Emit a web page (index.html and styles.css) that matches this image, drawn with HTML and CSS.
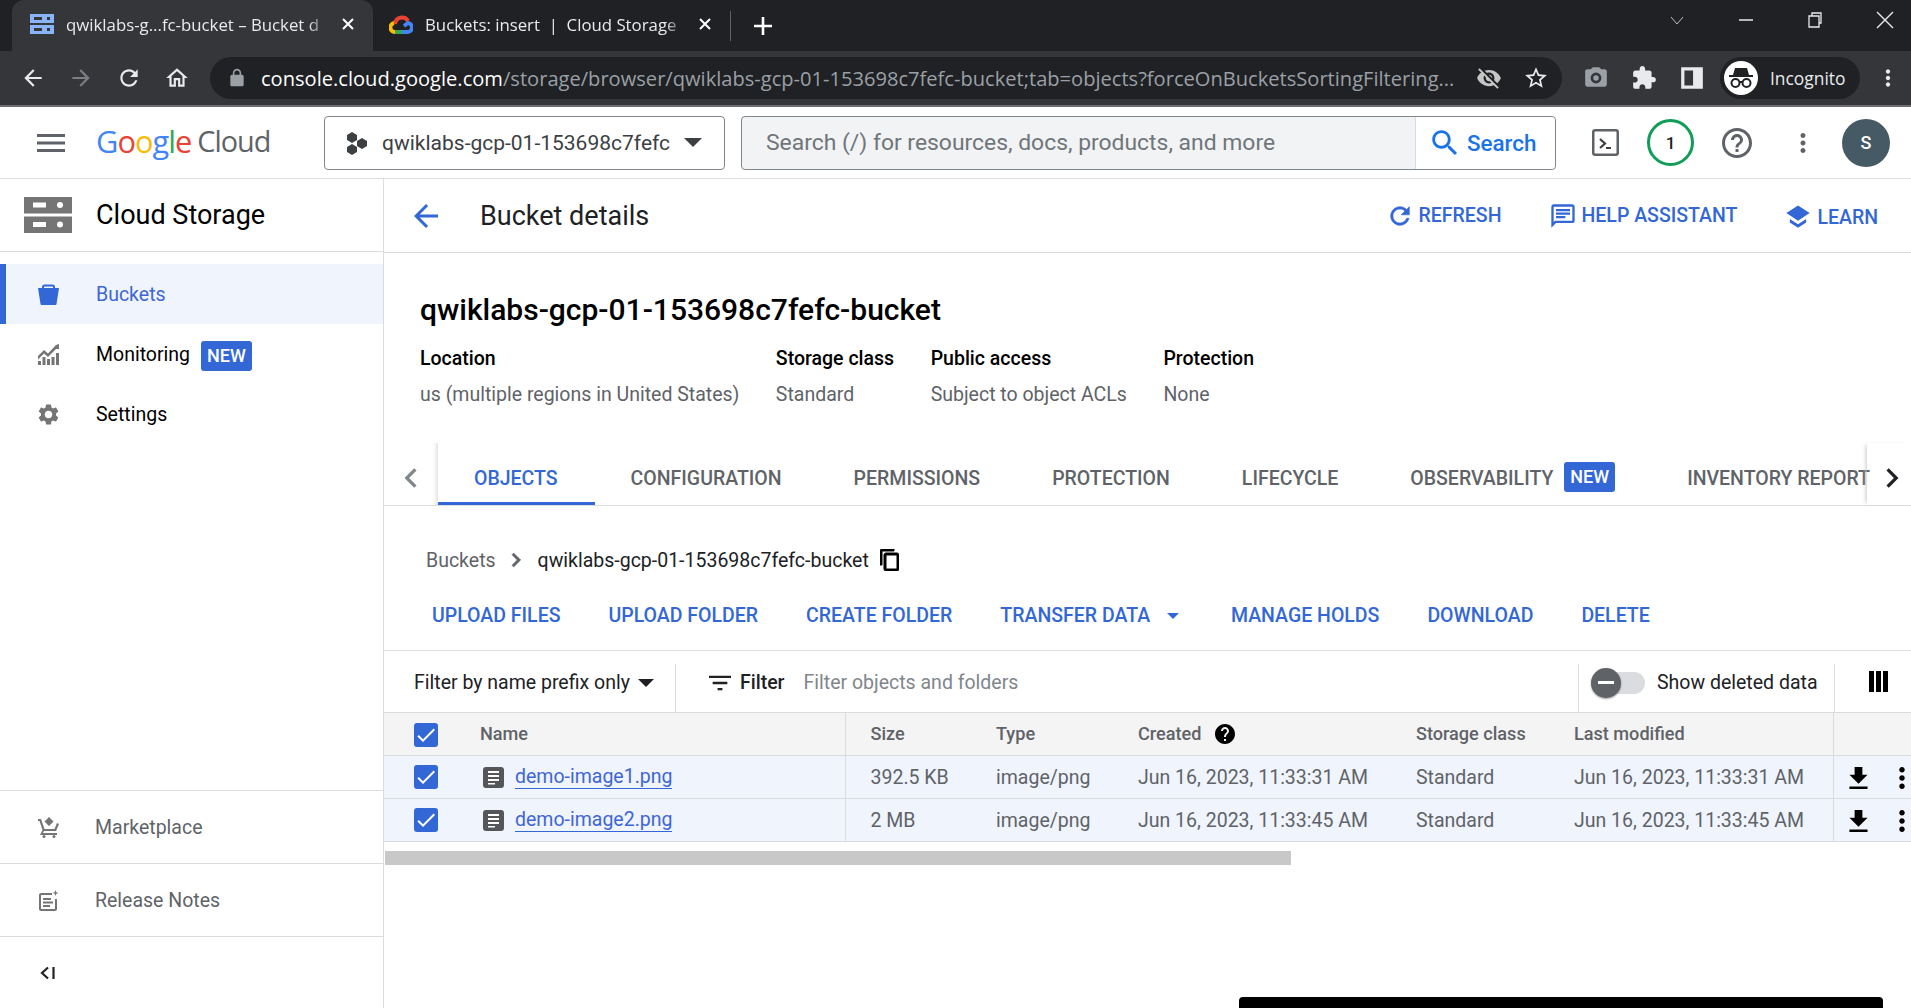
FILE: index.html
```html
<!DOCTYPE html>
<html lang="en">
<head>
    <meta charset="UTF-8">
    <title>Bucket details - Cloud Storage</title>
    <link rel="stylesheet" href="styles.css">
</head>
<body>
    <!-- browser chrome -->
    <div class="tabstrip">
        <div class="tab active">
            <svg class="favicon" viewBox="0 0 24 20"><path fill="#8ab4f8" d="M0 0h24v9H0zM0 11h24v9H0z"/><path fill="#35363a" d="M4 3h8v3H4zM4 14h8v3H4zM17 3h3v3h-3zM17 14h3v3h-3z"/></svg>
            <span class="tab-title">qwiklabs-g...fc-bucket – Bucket d</span>
            <svg class="tab-close" viewBox="0 0 14 14"><path stroke="#fff" stroke-width="2" d="M2 2l10 10M12 2L2 12"/></svg>
        </div>
        <div class="tab second">
            <svg class="favicon" viewBox="0 0 24 24"><path fill="none" stroke="#ea4335" stroke-width="4" d="M6 12a7 7 0 0 1 13-3"/><path fill="none" stroke="#fbbc04" stroke-width="4" d="M7 20a4.5 4.5 0 0 1-2-9"/><path fill="none" stroke="#34a853" stroke-width="4" d="M6 20h8"/><path fill="none" stroke="#4285f4" stroke-width="4" d="M13 20h5a4.5 4.5 0 0 0 1-9l-4 3"/></svg>
            <span class="tab-title">Buckets: insert &nbsp;|&nbsp; Cloud Storage &nbsp;|</span>
            <svg class="tab-close" viewBox="0 0 14 14"><path stroke="#fff" stroke-width="2" d="M2 2l10 10M12 2L2 12"/></svg>
        </div>
        <span class="tab-sep"></span>
        <svg class="new-tab" viewBox="0 0 20 20"><path stroke="#fff" stroke-width="2.6" d="M10 1v18M1 10h18"/></svg>
        <div class="window-controls">
            <svg width="16" height="16" viewBox="0 0 16 16"><path fill="none" stroke="#bdc1c6" d="M2 5l6 7 6-7"/></svg>
            <svg width="16" height="16" viewBox="0 0 16 16"><path stroke="#e8eaed" stroke-width="1.5" d="M1 8h14"/></svg>
            <svg width="16" height="16" viewBox="0 0 16 16"><path fill="none" stroke="#e8eaed" stroke-width="1.3" d="M2 4h10v11H2zM5 4V1h9v10h-2"/></svg>
            <svg width="18" height="18" viewBox="0 0 18 18"><path stroke="#e8eaed" stroke-width="1.4" d="M1 1l16 16M17 1L1 17"/></svg>
        </div>
    </div>
    <div class="toolbar">
        <div class="nav-btns">
            <svg class="tb-icon" viewBox="0 0 24 24"><path fill="#e8eaed" d="M20 11H7.83l5.59-5.59L12 4l-8 8 8 8 1.41-1.41L7.83 13H20v-2z"/></svg>
            <svg class="tb-icon" viewBox="0 0 24 24"><path fill="#7b7e83" d="M4 11h12.17l-5.59-5.59L12 4l8 8-8 8-1.41-1.41L16.17 13H4v-2z"/></svg>
            <svg class="tb-icon" viewBox="0 0 24 24"><path fill="#e8eaed" d="M17.65 6.35C16.2 4.9 14.21 4 12 4c-4.42 0-7.99 3.58-7.99 8s3.57 8 7.99 8c3.73 0 6.84-2.55 7.73-6h-2.08c-.82 2.33-3.04 4-5.65 4-3.31 0-6-2.69-6-6s2.69-6 6-6c1.66 0 3.14.69 4.22 1.78L13 11h7V4l-2.35 2.35z"/></svg>
            <svg class="tb-icon" viewBox="0 0 24 24"><path fill="#e8eaed" d="M12 5.69l5 4.5V18h-2v-6H9v6H7v-7.81l5-4.5M12 3L2 12h3v8h6v-6h2v6h6v-8h3L12 3z"/></svg>
        </div>
        <div class="omnibox">
            <svg class="lock" viewBox="0 0 24 24"><path fill="#9aa0a6" d="M18 8h-1V6c0-2.76-2.24-5-5-5S7 3.24 7 6v2H6c-1.1 0-2 .9-2 2v10c0 1.1.9 2 2 2h12c1.1 0 2-.9 2-2V10c0-1.1-.9-2-2-2zm-2.900 0H8.900V6c0-1.71 1.39-3.1 3.1-3.1 1.71 0 3.1 1.39 3.1 3.1v2z"/></svg>
            <span class="url"><b>console.cloud.google.com</b>/storage/browser/qwiklabs-gcp-01-153698c7fefc-bucket;tab=objects?forceOnBucketsSortingFiltering...</span>
            <svg class="tb-icon small" viewBox="0 0 24 24"><path fill="#c4c7c5" d="M12 7c2.76 0 5 2.24 5 5 0 .65-.13 1.26-.36 1.83l2.92 2.92c1.51-1.26 2.7-2.89 3.43-4.75-1.73-4.39-6-7.5-11-7.5-1.4 0-2.74.25-3.98.7l2.16 2.16C10.74 7.13 11.35 7 12 7zM2 4.27l2.28 2.28.46.46C3.08 8.3 1.78 10.02 1 12c1.73 4.39 6 7.5 11 7.5 1.55 0 3.03-.3 4.38-.84l.42.42L19.73 22 21 20.73 3.27 3 2 4.27zM7.53 9.8l1.55 1.55c-.05.21-.08.43-.08.65 0 1.66 1.34 3 3 3 .22 0 .44-.03.65-.08l1.55 1.55c-.67.33-1.41.53-2.2.53-2.76 0-5-2.24-5-5 0-.79.2-1.53.53-2.2zm4.31-.78l3.15 3.15.02-.16c0-1.66-1.34-3-3-3l-.17.01z"/></svg>
            <svg class="tb-icon small" viewBox="0 0 24 24"><path fill="#e8eaed" d="M22 9.24l-7.19-.62L12 2 9.19 8.63 2 9.24l5.46 4.73L5.82 21 12 17.27 18.18 21l-1.63-7.03L22 9.24zM12 15.4l-3.76 2.27 1-4.28-3.32-2.88 4.38-.38L12 6.1l1.71 4.04 4.38.38-3.32 2.88 1 4.28L12 15.4z"/></svg>
        </div>
        <div class="ext-btns">
            <svg class="tb-icon" viewBox="0 0 24 24"><path fill="#9aa0a6" fill-rule="evenodd" d="M9 2L7.17 4H4c-1.1 0-2 .9-2 2v12c0 1.1.9 2 2 2h16c1.1 0 2-.9 2-2V6c0-1.1-.9-2-2-2h-3.17L15 2H9zm3 15a5 5 0 110-10 5 5 0 010 10z"/><circle cx="12" cy="12" r="2.5" fill="#9aa0a6"/></svg>
            <svg class="tb-icon" viewBox="0 0 24 24"><path fill="#e8eaed" d="M20.5 11H19V7c0-1.1-.9-2-2-2h-4V3.5C13 2.12 11.88 1 10.5 1S8 2.12 8 3.5V5H4c-1.1 0-1.99.9-1.99 2v3.8H3.5c1.49 0 2.7 1.21 2.7 2.7s-1.21 2.7-2.7 2.7H2V20c0 1.1.9 2 2 2h3.8v-1.500c0-1.49 1.21-2.7 2.7-2.7 1.49 0 2.7 1.21 2.7 2.7V22H17c1.1 0 2-.9 2-2v-4h1.5c1.38 0 2.5-1.12 2.5-2.5S21.88 11 20.5 11z"/></svg>
            <svg class="tb-icon" viewBox="0 0 24 24"><path fill="#e8eaed" fill-rule="evenodd" d="M2 2h20v20H2zM5 5v14h8V5z"/></svg>
        </div>
        <div class="incognito">
            <span class="incognito-face">
                <svg width="28" height="22" viewBox="0 0 28 22"><path fill="#202124" d="M8 1h12l2 7H6zM2 8h24v2H2z"/><circle cx="8.5" cy="16" r="4" fill="none" stroke="#202124" stroke-width="2"/><circle cx="19.5" cy="16" r="4" fill="none" stroke="#202124" stroke-width="2"/><path stroke="#202124" stroke-width="2" d="M12 15h4"/></svg>
            </span>
            <span>Incognito</span>
        </div>
        <svg class="tb-icon chrome-more" viewBox="0 0 24 24"><path fill="#e8eaed" d="M12 8c1.1 0 2-.9 2-2s-.9-2-2-2-2 .9-2 2 .9 2 2 2zm0 2c-1.1 0-2 .9-2 2s.9 2 2 2 2-.9 2-2-.9-2-2-2zm0 6c-1.1 0-2 .9-2 2s.9 2 2 2 2-.9 2-2-.9-2-2-2z"/></svg>
    </div>

    <!-- console top bar -->
    <header class="appbar">
        <svg class="menu-icon" viewBox="0 0 28 18"><path fill="#5f6368" d="M0 0h28v3H0zM0 7.5h28v3H0zM0 15h28v3H0z"/></svg>
        <div class="logo"><i class="g-blue">G</i><i class="g-red">o</i><i class="g-yellow">o</i><i class="g-blue">g</i><i class="g-green">l</i><i class="g-red">e</i><span>Cloud</span></div>
        <div class="project-picker">
            <svg width="24" height="24" viewBox="0 0 24 24"><path fill="#3c4043" d="M7 1l5 3v5l-5 3-5-3V4zM17 7l5 3v5l-5 3-5-3v-5zM7 13l5 3v5l-5 3-5-3v-5z"/></svg>
            <span class="project-name">qwiklabs-gcp-01-153698c7fefc</span>
            <span class="caret"></span>
        </div>
        <div class="searchbox">
            <span class="search-text">Search (/) for resources, docs, products, and more</span>
            <div class="search-btn">
                <svg width="34" height="34" viewBox="0 0 24 24"><path fill="#1a73e8" d="M15.5 14h-.79l-.28-.27C15.41 12.59 16 11.11 16 9.5 16 5.91 13.09 3 9.5 3S3 5.91 3 9.5 5.91 16 9.5 16c1.61 0 3.09-.59 4.23-1.57l.27.28v.79l5 4.99L20.49 19l-4.99-5zm-6 0C7.01 14 5 11.99 5 9.5S7.01 5 9.5 5 14 7.01 14 9.5 11.99 14 9.5 14z"/></svg>
                <span>Search</span>
            </div>
        </div>
        <svg class="terminal" viewBox="0 0 27 27"><rect x="1.25" y="1.25" width="24.5" height="24.5" rx="2" fill="none" stroke="#5f6368" stroke-width="2.5"/><path fill="none" stroke="#3c4043" stroke-width="2.2" d="M8 10l5 4.5L8 19M14 19h5"/></svg>
        <span class="notif">1</span>
        <svg class="help-icon" viewBox="0 0 24 24"><path fill="#5f6368" d="M11 18h2v-2h-2v2zm1-16C6.48 2 2 6.48 2 12s4.48 10 10 10 10-4.48 10-10S17.52 2 12 2zm0 18c-4.41 0-8-3.59-8-8s3.59-8 8-8 8 3.59 8 8-3.59 8-8 8zm0-14c-2.21 0-4 1.79-4 4h2c0-1.1.9-2 2-2s2 .9 2 2c0 2-3 1.75-3 5h2c0-2.25 3-2.5 3-5 0-2.21-1.79-4-4-4z"/></svg>
        <svg class="app-more" viewBox="0 0 24 24"><path fill="#5f6368" d="M12 8c1.1 0 2-.9 2-2s-.9-2-2-2-2 .9-2 2 .9 2 2 2zm0 2c-1.1 0-2 .9-2 2s.9 2 2 2 2-.9 2-2-.9-2-2-2zm0 6c-1.1 0-2 .9-2 2s.9 2 2 2 2-.9 2-2-.9-2-2-2z"/></svg>
        <span class="avatar">S</span>
    </header>

    <div class="layout">
        <aside class="sidebar">
            <div class="side-head">
                <svg width="48" height="36" viewBox="0 0 48 36"><path fill="#757575" d="M0 0h48v16.5H0zM0 19.500h48V36H0z"/><path fill="#fff" d="M9 5.500h13v5H9zM9 25h13v5H9z"/><circle cx="36" cy="8" r="3" fill="#fff"/><circle cx="36" cy="27.5" r="3" fill="#fff"/></svg>
                <span>Cloud Storage</span>
            </div>
            <nav class="side-nav">
                <a class="side-item selected">
                    <svg viewBox="0 0 21 21"><path fill="#3367d6" d="M4 3c0-1.5 1-2.5 2.5-2.5h8C16 .5 17 1.5 17 3v1h4l-2.500 16c-.1.6-.5 1-1 1h-14c-.5 0-.9-.4-1-1L0 4h4zm2 1h9V3c0-.4-.2-.6-.6-.6H6.600C6.200 2.400 6 2.600 6 3z"/></svg>
                    <span>Buckets</span>
                </a>
                <a class="side-item">
                    <svg viewBox="0 0 21 21"><path fill="#757575" d="M0 12l6-6 4 3.500L18 1l3-1v5l-3 0-8 8-4-3.500-6 6zM0 17h3v4H0zM4.500 13h3v8h-3zM9 15h3v6H9zM13.500 13h3v8h-3zM18 9h3v12h-3z"/></svg>
                    <span>Monitoring</span>
                    <span class="badge">NEW</span>
                </a>
                <a class="side-item">
                    <svg viewBox="2 2 20 20"><path fill="#757575" d="M19.14 12.94c.04-.3.06-.61.06-.94 0-.32-.02-.64-.07-.94l2.03-1.58c.18-.14.23-.41.12-.61l-1.92-3.32c-.12-.22-.37-.29-.59-.22l-2.39.96c-.5-.38-1.03-.7-1.62-.94l-.36-2.54c-.04-.24-.24-.41-.48-.41h-3.84c-.24 0-.43.17-.47.41l-.36 2.54c-.59.24-1.13.57-1.62.94l-2.39-.96c-.22-.08-.47 0-.59.22L2.74 8.87c-.12.21-.08.47.12.61l2.03 1.58c-.05.3-.09.63-.09.94s.02.64.07.94l-2.03 1.58c-.18.14-.23.41-.12.61l1.92 3.32c.12.22.37.29.59.22l2.39-.96c.5.38 1.03.7 1.62.94l.36 2.54c.05.24.24.41.48.41h3.84c.24 0 .44-.17.47-.41l.36-2.54c.59-.24 1.13-.56 1.62-.94l2.39.96c.22.08.47 0 .59-.22l1.92-3.32c.12-.22.07-.47-.12-.61l-2.01-1.58zM12 15.6c-1.98 0-3.6-1.62-3.6-3.6s1.62-3.6 3.6-3.6 3.6 1.62 3.6 3.6-1.62 3.6-3.6 3.6z"/></svg>
                    <span>Settings</span>
                </a>
            </nav>
            <div class="side-foot">
                <a class="foot-item">
                    <svg viewBox="0 0 21 21"><path fill="#757575" d="M11 0l4.500 4.500L11 9 6.500 4.500zM0 2h3l3.500 10h10L19 6l2 1-3 7H6l-1 2h14v2H2l2.500-5L1.500 4H0z"/><circle cx="6" cy="19.5" r="1.5" fill="#757575"/><circle cx="16" cy="19.5" r="1.5" fill="#757575"/></svg>
                    <span>Marketplace</span>
                </a>
                <a class="foot-item">
                    <svg viewBox="0 0 21 21"><path fill="#757575" d="M3 3h11v2H3v14h14V9h2v10c0 1.1-.9 2-2 2H3c-1.1 0-2-.9-2-2V5c0-1.1.9-2 2-2zM5 8h8v2H5zM5 11.500h10v2H5zM5 15h7v2H5zM17.500 0l.8 2.200 2.200.8-2.200.8-.8 2.200-.8-2.200-2.200-.8 2.200-.8z"/></svg>
                    <span>Release Notes</span>
                </a>
                <div class="collapse-row">
                    <svg width="15" height="14" viewBox="0 0 15 14"><path fill="none" stroke="#202124" stroke-width="2.2" d="M8 1.500L2 7l6 5.500M13.500 1v12"/></svg>
                </div>
            </div>
        </aside>

        <main class="main">
            <div class="page-head">
                <svg class="back" viewBox="4 4 16 16"><path fill="#3367d6" d="M20 11H7.83l5.59-5.59L12 4l-8 8 8 8 1.41-1.41L7.83 13H20v-2z"/></svg>
                <h1>Bucket details</h1>
                <div class="page-actions">
                    <a class="page-action">
                        <svg width="28" height="28" viewBox="0 0 24 24"><path fill="#3367d6" stroke="#3367d6" stroke-width=".5" d="M17.65 6.35C16.2 4.9 14.21 4 12 4c-4.42 0-7.99 3.58-7.99 8s3.57 8 7.990 8c3.730 0 6.840-2.550 7.730-6h-2.080c-.82 2.330-3.040 4-5.650 4-3.310 0-6-2.690-6-6s2.690-6 6-6c1.660 0 3.140.69 4.220 1.780L13 11h7V4l-2.350 2.350z"/></svg>
                        <span>REFRESH</span>
                    </a>
                    <a class="page-action">
                        <svg width="28" height="28" viewBox="0 0 24 24"><path fill="#3367d6" d="M20 2H4c-1.1 0-2 .9-2 2v18l4-4h14c1.1 0 2-.9 2-2V4c0-1.1-.9-2-2-2zm0 14H5.170L4 17.170V4h16v12zM6 12h8v2H6zm0-3h12v2H6zm0-3h12v2H6z"/></svg>
                        <span>HELP ASSISTANT</span>
                    </a>
                    <a class="page-action low">
                        <svg width="28" height="28" viewBox="0 0 24 24"><path fill="#3367d6" d="M12 3L2 9.5l10 6.500 10-6.500zM5 14.500v3L12 22l7-4.500v-3L12 19z"/></svg>
                        <span>LEARN</span>
                    </a>
                </div>
            </div>

            <section class="summary">
                <h2>qwiklabs-gcp-01-153698c7fefc-bucket</h2>
                <div class="summary-grid">
                    <div><strong>Location</strong><span>us (multiple regions in United States)</span></div>
                    <div><strong>Storage class</strong><span>Standard</span></div>
                    <div><strong>Public access</strong><span>Subject to object ACLs</span></div>
                    <div><strong>Protection</strong><span>None</span></div>
                </div>
            </section>

            <div class="tabs">
                <span class="tab-arrow left"><svg width="22" height="26" viewBox="6 4 12 16"><path fill="#80868b" d="M15.41 7.41L14 6l-6 6 6 6 1.41-1.41L10.83 12z"/></svg></span>
                <div class="tab-list">
                    <a class="page-tab current">OBJECTS</a>
                    <a class="page-tab">CONFIGURATION</a>
                    <a class="page-tab">PERMISSIONS</a>
                    <a class="page-tab">PROTECTION</a>
                    <a class="page-tab">LIFECYCLE</a>
                    <a class="page-tab">OBSERVABILITY <span class="badge">NEW</span></a>
                    <a class="page-tab last">INVENTORY REPORT</a>
                </div>
                <span class="tab-arrow right"><svg width="22" height="26" viewBox="6 4 12 16"><path fill="#202124" d="M10 6L8.590 7.410 13.170 12l-4.580 4.590L10 18l6-6z"/></svg></span>
            </div>

            <div class="crumbs">
                <span class="crumb-root">Buckets</span>
                <svg class="crumb-chev" width="12" height="16" viewBox="7 5 10 14"><path fill="#5f6368" stroke="#5f6368" stroke-width=".7" d="M10 6L8.590 7.410 13.170 12l-4.580 4.590L10 18l6-6z"/></svg>
                <span class="crumb-cur">qwiklabs-gcp-01-153698c7fefc-bucket</span>
                <svg width="19" height="22" viewBox="2 1 19 22"><path fill="#000" stroke="#000" d="M16 1H4c-1.1 0-2 .9-2 2v14h2V3h12V1zm3 4H8c-1.1 0-2 .9-2 2v14c0 1.100.9 2 2 2h11c1.100 0 2-.9 2-2V7c0-1.100-.9-2-2-2zm0 16H8V7h11v14z"/></svg>
            </div>

            <div class="actions">
                <a>UPLOAD FILES</a>
                <a>UPLOAD FOLDER</a>
                <a>CREATE FOLDER</a>
                <a class="with-caret">TRANSFER DATA <span class="caret small"></span></a>
                <a>MANAGE HOLDS</a>
                <a>DOWNLOAD</a>
                <a>DELETE</a>
            </div>

            <div class="filterbar">
                <span class="prefix">Filter by name prefix only <span class="caret mid"></span></span>
                <div class="filter-field">
                    <svg width="22" height="22" viewBox="3 3 18 18"><path fill="#202124" d="M10 18h4v-2h-4v2zM3 6v2h18V6H3zm3 7h12v-2H6v2z"/></svg>
                    <span class="filter-label">Filter</span>
                    <span class="filter-hint">Filter objects and folders</span>
                </div>
                <div class="deleted">
                    <span class="toggle"><span class="knob"></span></span>
                    <span>Show deleted data</span>
                </div>
                <div class="col-toggle">
                    <svg width="19" height="21" viewBox="0 0 19 21"><path fill="#000" d="M0 0h5v21H0zM7 0h5v21H7zM14 0h5v21h-5z"/></svg>
                </div>
            </div>

            <table class="objects">
                <colgroup>
                    <col class="c-check"><col class="c-name"><col class="c-size"><col class="c-type"><col class="c-date"><col class="c-class"><col class="c-mod"><col class="c-act">
                </colgroup>
                <thead>
                    <tr>
                        <th class="check"><span class="cbox"><svg viewBox="0 0 24 24"><path fill="#fff" d="M9 16.170L4.830 12l-1.420 1.410L9 19 21 7l-1.410-1.410z"/></svg></span></th>
                        <th class="divided">Name</th>
                        <th>Size</th>
                        <th>Type</th>
                        <th>Created <svg class="info" viewBox="2 2 20 20"><path fill="#000" d="M12 2C6.480 2 2 6.480 2 12s4.480 10 10 10 10-4.480 10-10S17.520 2 12 2zm1 17h-2v-2h2v2zm2.070-7.750l-.9.920C13.450 12.900 13 13.500 13 15h-2v-.5c0-1.100.45-2.100 1.170-2.830l1.240-1.260c.37-.36.59-.86.59-1.410 0-1.100-.9-2-2-2s-2 .9-2 2H8c0-2.210 1.790-4 4-4s4 1.790 4 4c0 .88-.36 1.680-.93 2.250z"/></svg></th>
                        <th>Storage class</th>
                        <th class="divided">Last modified</th>
                        <th></th>
                    </tr>
                </thead>
                <tbody>
                    <tr>
                        <td class="check"><span class="cbox"><svg viewBox="0 0 24 24"><path fill="#fff" d="M9 16.170L4.830 12l-1.420 1.410L9 19 21 7l-1.410-1.410z"/></svg></span></td>
                        <td class="divided"><span class="file"><svg viewBox="0 0 21 21"><rect width="21" height="21" rx="3" fill="#55565a"/><path fill="#fff" d="M5 4h11v2H5zM5 8h11v2H5zM5 12h11v2H5zM5 16h7v1.5H5z"/></svg><a>demo-image1.png</a></span></td>
                        <td>392.5 KB</td>
                        <td>image/png</td>
                        <td>Jun 16, 2023, 11:33:31 AM</td>
                        <td>Standard</td>
                        <td class="divided">Jun 16, 2023, 11:33:31 AM</td>
                        <td class="row-actions">
                            <svg class="dl" viewBox="5 3 14 17"><path fill="#000" d="M19 9h-4V3H9v6H5l7 7 7-7zM5 18v2h14v-2H5z"/></svg>
                            <svg class="more" viewBox="10 4 4 16"><path fill="#000" d="M12 8c1.1 0 2-.9 2-2s-.9-2-2-2-2 .9-2 2 .9 2 2 2zm0 2c-1.1 0-2 .9-2 2s.9 2 2 2 2-.9 2-2-.9-2-2-2zm0 6c-1.1 0-2 .9-2 2s.9 2 2 2 2-.9 2-2-.9-2-2-2z"/></svg>
                        </td>
                    </tr>
                    <tr>
                        <td class="check"><span class="cbox"><svg viewBox="0 0 24 24"><path fill="#fff" d="M9 16.170L4.830 12l-1.420 1.410L9 19 21 7l-1.410-1.410z"/></svg></span></td>
                        <td class="divided"><span class="file"><svg viewBox="0 0 21 21"><rect width="21" height="21" rx="3" fill="#55565a"/><path fill="#fff" d="M5 4h11v2H5zM5 8h11v2H5zM5 12h11v2H5zM5 16h7v1.5H5z"/></svg><a>demo-image2.png</a></span></td>
                        <td>2 MB</td>
                        <td>image/png</td>
                        <td>Jun 16, 2023, 11:33:45 AM</td>
                        <td>Standard</td>
                        <td class="divided">Jun 16, 2023, 11:33:45 AM</td>
                        <td class="row-actions">
                            <svg class="dl" viewBox="5 3 14 17"><path fill="#000" d="M19 9h-4V3H9v6H5l7 7 7-7zM5 18v2h14v-2H5z"/></svg>
                            <svg class="more" viewBox="10 4 4 16"><path fill="#000" d="M12 8c1.1 0 2-.9 2-2s-.9-2-2-2-2 .9-2 2 .9 2 2 2zm0 2c-1.1 0-2 .9-2 2s.9 2 2 2 2-.9 2-2-.9-2-2-2zm0 6c-1.1 0-2 .9-2 2s.9 2 2 2 2-.9 2-2-.9-2-2-2z"/></svg>
                        </td>
                    </tr>
                </tbody>
            </table>
            <div class="hscroll"><div class="hscroll-thumb"></div></div>
        </main>
    </div>
    <div class="snackbar"></div>
</body>
</html>
```

FILE: styles.css
```css
* {
    box-sizing: border-box;
}
html, body {
    margin: 0;
    height: 100%;
}
body {
    display: flex;
    flex-direction: column;
    overflow: hidden;
    background: #fff;
    color: #202124;
    font-family: Roboto, "Liberation Sans", sans-serif;
    font-size: 19.5px;
}
a {
    color: inherit;
    text-decoration: none;
}

/* browser chrome */
.tabstrip {
    display: flex;
    align-items: flex-end;
    height: 51px;
    padding-left: 12px;
    background: #202124;
    flex: none;
}
.tab {
    display: flex;
    align-items: center;
    width: 361px;
    height: 51px;
    padding: 0 18px 3px 18px;
    color: #e8eaed;
    font-family: "Open Sans", sans-serif;
    font-size: 16.8px;
}
.tab.active {
    background: #35363a;
    border-radius: 12px 12px 0 0;
}
.tab.second {
    width: 357px;
    padding-left: 16px;
}
.favicon {
    width: 24px;
    height: 24px;
    flex: none;
    margin-right: 12px;
}
.tab-title {
    flex: 1;
    min-width: 0;
    white-space: nowrap;
    -webkit-mask-image: linear-gradient(90deg, #000 92%, transparent);
    mask-image: linear-gradient(90deg, #000 92%, transparent);
}
.tab-close {
    width: 14px;
    height: 14px;
    margin-left: 12px;
    flex: none;
}
.tab-sep {
    width: 1px;
    height: 30px;
    margin-bottom: 10px;
    background: #5f6368;
}
.new-tab {
    width: 20px;
    height: 20px;
    margin: 0 0 15px 22px;
    flex: none;
}
.window-controls {
    display: flex;
    align-items: center;
    gap: 53px;
    margin-left: auto;
    padding: 0 17px 22px 0;
}
.toolbar {
    display: flex;
    align-items: center;
    height: 56px;
    background: #35363a;
    border-bottom: 2px solid #6d6e70;
    flex: none;
}
.tb-icon {
    width: 26px;
    height: 26px;
    flex: none;
}
.nav-btns {
    display: flex;
    gap: 22px;
    padding-left: 20px;
    width: 210px;
}
.omnibox {
    display: flex;
    align-items: center;
    width: 1352px;
    height: 42px;
    padding: 0 13px 0 17px;
    border-radius: 21px;
    background: #202124;
    flex: none;
}
.lock {
    width: 20px;
    height: 20px;
    margin-right: 14px;
    flex: none;
}
.url {
    width: 1200px;
    overflow: hidden;
    white-space: nowrap;
    color: #9aa0a6;
    font-family: "Open Sans", sans-serif;
    font-size: 20.1px;
    flex: none;
}
.url b {
    color: #fff;
    font-weight: 400;
}
.tb-icon.small {
    margin-left: 15px;
}
.tb-icon.small + .tb-icon.small {
    margin-left: 21px;
}
.ext-btns {
    display: flex;
    align-items: center;
    gap: 22px;
    margin-left: 21px;
}
.incognito {
    display: flex;
    align-items: center;
    gap: 12px;
    width: 140px;
    height: 42px;
    margin-left: 15px;
    padding-left: 4px;
    border-radius: 21px;
    background: #202124;
    color: #e8eaed;
    font-family: "Open Sans", sans-serif;
    font-size: 17.4px;
    flex: none;
}
.incognito-face {
    display: flex;
    align-items: center;
    justify-content: center;
    width: 34px;
    height: 34px;
    border-radius: 50%;
    background: #fff;
}
.chrome-more {
    margin-left: 15px;
}

/* console top bar */
.appbar {
    display: flex;
    align-items: center;
    height: 72px;
    border-bottom: 1px solid #dadce0;
    flex: none;
}
.menu-icon {
    width: 28px;
    height: 18px;
    margin-left: 37px;
    flex: none;
}
.logo {
    display: flex;
    width: 228px;
    margin: -4px 0 0 31px;
    color: #5f6368;
    font-family: "Open Sans", sans-serif;
    font-size: 30.8px;
    letter-spacing: -1px;
    white-space: nowrap;
}
.logo i {
    font-style: normal;
}
.logo span {
    margin-left: 6px;
    font-size: 28.8px;
    line-height: 42px;
}
.g-blue { color: #4285f4; }
.g-red { color: #ea4335; }
.g-yellow { color: #fbbc04; }
.g-green { color: #34a853; }
.project-picker {
    display: flex;
    align-items: center;
    width: 401px;
    height: 54px;
    padding-left: 20px;
    border: 1px solid #80868b;
    border-radius: 4px;
    flex: none;
}
.project-name {
    margin-left: 13px;
    color: #3c4043;
    font-size: 21px;
}
.caret {
    display: inline-block;
    width: 0;
    height: 0;
    margin-left: 14px;
    border-left: 9px solid transparent;
    border-right: 9px solid transparent;
    border-top: 9px solid #3c4043;
}
.caret.small {
    margin-left: 12px;
    border-left-width: 6px;
    border-right-width: 6px;
    border-top: 6px solid #3367d6;
    vertical-align: 3px;
}
.caret.mid {
    margin-left: 8px;
    border-left-width: 8px;
    border-right-width: 8px;
    border-top: 8px solid #202124;
}
.searchbox {
    display: flex;
    width: 815px;
    height: 54px;
    margin-left: 16px;
    border: 1px solid #80868b;
    border-radius: 4px;
    background: #f1f3f4;
    flex: none;
}
.search-text {
    flex: 1;
    align-self: center;
    padding-left: 24px;
    color: #70757a;
    font-size: 22.9px;
}
.search-btn {
    display: flex;
    align-items: center;
    gap: 5px;
    width: 140px;
    padding-left: 12px;
    border-left: 1px solid #dadce0;
    border-radius: 0 4px 4px 0;
    background: #fff;
    color: #1a73e8;
    font-size: 22.4px;
    font-weight: 500;
}
.terminal {
    width: 27px;
    height: 27px;
    margin-left: 36px;
    flex: none;
}
.notif {
    display: flex;
    align-items: center;
    justify-content: center;
    width: 47px;
    height: 47px;
    margin-left: 28px;
    border: 3px solid #0f9d58;
    border-radius: 50%;
    font-size: 17px;
    font-weight: 500;
    flex: none;
}
.help-icon {
    width: 36px;
    height: 36px;
    margin-left: 25px;
    flex: none;
}
.app-more {
    width: 30px;
    height: 30px;
    margin-left: 33px;
    flex: none;
}
.avatar {
    display: flex;
    align-items: center;
    justify-content: center;
    width: 48px;
    height: 48px;
    margin-left: 24px;
    border-radius: 50%;
    background: #455a64;
    color: #fff;
    font-size: 18px;
    font-weight: 500;
    flex: none;
}

/* page layout */
.layout {
    display: flex;
    flex: 1;
    min-height: 0;
}
.sidebar {
    display: flex;
    flex-direction: column;
    width: 384px;
    border-right: 1px solid #dadce0;
    flex: none;
}
.side-head {
    display: flex;
    align-items: center;
    gap: 24px;
    height: 73px;
    padding-left: 24px;
    border-bottom: 1px solid #dadce0;
    color: #000;
    font-size: 27px;
}
.side-nav {
    padding-top: 12px;
}
.side-item {
    display: flex;
    align-items: center;
    height: 60px;
    padding-left: 38px;
    color: #000;
}
.side-item svg, .foot-item svg {
    width: 21px;
    height: 21px;
    margin-right: 37px;
    flex: none;
}
.foot-item svg {
    margin-right: 36px;
}
.side-item.selected {
    padding-left: 32px;
    border-left: 6px solid #3367d6;
    background: #f0f4fd;
    color: #3f66d6;
}
.badge {
    display: inline-block;
    padding: 0 6px;
    border-radius: 3px;
    background: #3367d6;
    color: #fff;
    font-size: 18px;
    font-weight: 500;
    line-height: 30px;
}
.side-item .badge {
    margin: 3px 0 0 11px;
}
.side-foot {
    margin-top: auto;
    height: 218px;
}
.foot-item {
    display: flex;
    align-items: center;
    height: 73px;
    padding-left: 38px;
    border-top: 1px solid #dadce0;
    color: #5f6368;
}
.collapse-row {
    display: flex;
    align-items: center;
    height: 72px;
    padding-left: 40px;
    border-top: 1px solid #dadce0;
}

/* main column */
.main {
    flex: 1;
    min-width: 0;
}
.page-head {
    display: flex;
    align-items: center;
    height: 74px;
    padding-left: 30px;
    border-bottom: 1px solid #dadce0;
}
.back {
    width: 24px;
    height: 24px;
    flex: none;
}
h1 {
    margin: 0 0 0 42px;
    font-size: 27px;
    font-weight: 400;
}
.page-actions {
    display: flex;
    gap: 47px;
    margin-left: auto;
    padding-right: 33px;
}
.page-action {
    display: flex;
    align-items: center;
    gap: 5px;
    color: #3367d6;
    font-weight: 500;
}
.page-action.low span {
    margin-top: 3px;
}
.summary {
    height: 190px;
    padding: 38px 0 0 36px;
}
h2 {
    margin: 0 0 19px;
    color: #000;
    font-size: 30px;
    font-weight: 500;
    line-height: 38px;
}
.summary-grid {
    display: flex;
}
.summary-grid div {
    display: flex;
    flex-direction: column;
    gap: 14px;
    margin-right: 36.5px;
}
.summary-grid strong {
    color: #000;
    font-weight: 500;
    line-height: 22px;
}
.summary-grid span {
    color: #5f6368;
    line-height: 22px;
}
.tabs {
    display: flex;
    height: 63px;
    border-bottom: 1px solid #dadce0;
}
.tab-arrow {
    display: flex;
    align-items: center;
    justify-content: center;
    padding-top: 7px;
    flex: none;
}
.tab-arrow.left {
    width: 54px;
    box-shadow: inset -6px 0 5px -5px #d5d5d5;
}
.tab-arrow.right {
    width: 44px;
    padding-left: 6px;
    box-shadow: -3px 0 4px -2px #c8c8c8;
    z-index: 1;
}
.tab-list {
    display: flex;
    flex: 1;
    min-width: 0;
}
.page-tab {
    display: flex;
    align-items: center;
    gap: 11px;
    padding: 8px 36px 0;
    color: #5f6368;
    font-weight: 500;
    white-space: nowrap;
    flex: none;
}
.page-tab.last {
    padding-right: 0;
}
.page-tab .badge {
    margin-top: -2px;
}
.page-tab.current {
    padding-right: 37px;
    box-shadow: inset 0 -3px #3367d6;
    color: #3367d6;
}
.crumbs {
    display: flex;
    align-items: center;
    gap: 14px;
    height: 24px;
    margin: 42px 0 0 42px;
}
.crumb-root {
    color: #5f6368;
}
.crumb-chev {
    margin-right: 2px;
}
.crumb-cur {
    color: #202124;
    margin-right: -3px;
}
.actions {
    display: flex;
    align-items: center;
    gap: 48px;
    height: 79px;
    padding: 9px 0 0 48px;
    border-bottom: 1px solid #dadce0;
    color: #3367d6;
    font-weight: 500;
}
.with-caret {
    margin-right: 4px;
}
.filterbar {
    display: flex;
    align-items: flex-end;
    height: 61px;
    padding-left: 30px;
}
.prefix {
    display: flex;
    align-items: center;
    width: 262px;
    height: 48px;
    padding-bottom: 11px;
    border-right: 1px solid #dadce0;
    flex: none;
    color: #202124;
}
.filter-field {
    display: flex;
    align-items: center;
    flex: 1;
    height: 48px;
    padding: 0 0 11px 33px;
}
.filter-label {
    margin-left: 9px;
    font-weight: 500;
}
.filter-hint {
    margin-left: 19px;
    color: #80868b;
}
.deleted {
    display: flex;
    align-items: center;
    gap: 12px;
    width: 257px;
    height: 48px;
    padding: 0 0 11px 12px;
    border-left: 1px solid #dadce0;
    border-right: 1px solid #dadce0;
    flex: none;
}
.toggle {
    position: relative;
    width: 54px;
    height: 22px;
    border-radius: 11px;
    background: #dadce0;
    flex: none;
}
.knob {
    position: absolute;
    left: 0;
    top: -4px;
    width: 30px;
    height: 30px;
    border-radius: 50%;
    background: #5f6368;
    box-shadow: 0 1px 2px rgba(0,0,0,.4);
}
.knob::after {
    content: "";
    position: absolute;
    left: 7px;
    top: 13px;
    width: 16px;
    height: 3px;
    background: #fff;
}
.col-toggle {
    width: 76px;
    height: 48px;
    padding: 7px 0 0 34px;
    line-height: 0;
    flex: none;
}

/* objects table */
.objects {
    width: 100%;
    border-collapse: collapse;
    table-layout: fixed;
    border-top: 1px solid #dadce0;
}
.c-check { width: 81px; }
.c-name { width: 380px; }
.c-size { width: 126px; }
.c-type { width: 142px; }
.c-date { width: 278px; }
.c-class { width: 157px; }
.c-mod { width: 285px; }
.c-act { width: 78px; }
.objects th, .objects td {
    height: 43px;
    padding: 0 0 0 25px;
    border-bottom: 1px solid #dadce0;
    text-align: left;
    white-space: nowrap;
}
.objects th {
    padding-bottom: 2px;
    background: #f4f4f4;
    color: #5f6368;
    font-size: 18.1px;
    font-weight: 500;
}
.objects td {
    background: #f0f4fd;
    color: #5f6368;
}
.objects .check {
    padding-left: 30px;
    line-height: 0;
}
.objects th.check {
    padding: 2px 0 0 30px;
}
.objects .divided {
    padding-left: 15px;
    border-right: 1px solid #dadce0;
}
.objects th.divided:nth-child(7), .objects td.divided:nth-child(7) {
    padding-left: 26px;
}
.cbox {
    display: inline-block;
    width: 24px;
    height: 24px;
    border-radius: 3px;
    background: #3367d6;
}
.cbox svg {
    display: block;
    width: 24px;
    height: 24px;
}
.info {
    width: 20px;
    height: 20px;
    margin-left: 9px;
    vertical-align: -4px;
}
.file {
    display: flex;
    align-items: center;
    gap: 11px;
    padding: 1px 0 0 3px;
}
.file svg {
    width: 21px;
    height: 21px;
    flex: none;
}
.file a {
    color: #3f66d6;
    border-bottom: 1px solid #3367d6;
    line-height: 22px;
}
.objects .row-actions {
    padding-left: 15px;
}
.dl {
    width: 19px;
    height: 22px;
    vertical-align: middle;
}
.more {
    width: 6px;
    height: 22px;
    margin-left: 27px;
    vertical-align: middle;
}
.hscroll {
    height: 14px;
    margin: 9px 0 0 1px;
}
.hscroll-thumb {
    width: 906px;
    height: 14px;
    background: #c8c8c8;
}
.snackbar {
    position: fixed;
    left: 1239px;
    bottom: 0;
    width: 644px;
    height: 11px;
    border-radius: 4px 4px 0 0;
    background: #000;
}
```
